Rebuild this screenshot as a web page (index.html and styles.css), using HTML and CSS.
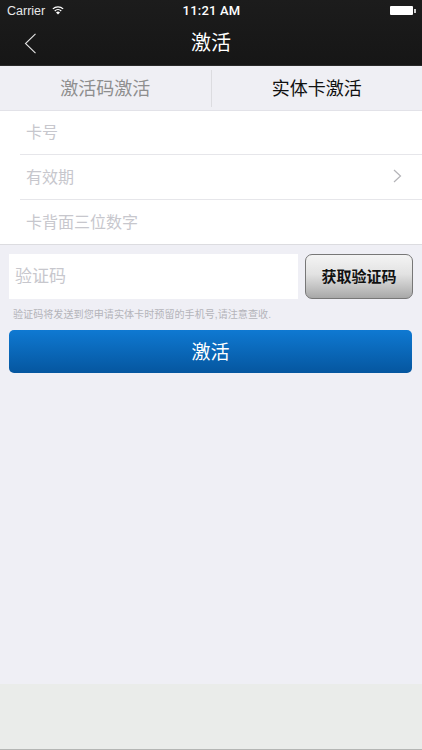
FILE: index.html
```html
<!DOCTYPE html>
<html lang="zh-CN">
<head>
  <meta charset="UTF-8" />
  <meta name="viewport" content="width=device-width, initial-scale=1.0" />
  <title>激活</title>
  <link rel="stylesheet" href="styles.css">
</head>
<body>
  <div class="app">
    <header class="nav">
      <div class="status">
        <div class="status-left">
          <span>Carrier</span>
          <svg class="wifi" width="12" height="9" viewBox="0 0 14 10">
            <path d="M7 9.8 4.7 7.3a3.2 3.2 0 0 1 4.6 0z" fill="#fff"/>
            <path d="M3.2 5.5a5.4 5.4 0 0 1 7.6 0M1 3.1a8.6 8.6 0 0 1 12 0" fill="none" stroke="#fff" stroke-width="1.5"/>
          </svg>
        </div>
        <div class="status-time">11:21 AM</div>
        <div class="status-right">
          <span class="battery"></span><span class="battery-tip"></span>
        </div>
      </div>
      <div class="nav-bar">
        <svg class="back" width="13" height="21" viewBox="0 0 13 21">
          <path d="M11.5 0.8 1.5 10.5l10 9.7" fill="none" stroke="#e4e4e4" stroke-width="1.1"/>
        </svg>
        <h1>激活</h1>
      </div>
    </header>

    <div class="tabs">
      <div class="tab tab-left">激活码激活</div>
      <div class="tab tab-active">实体卡激活</div>
    </div>

    <div class="form-group">
      <div class="form-row">卡号</div>
      <div class="form-row">
        <span>有效期</span>
        <svg class="chevron" width="9" height="14" viewBox="0 0 9 14">
          <path d="M1 1l6.5 6L1 13" fill="none" stroke="#b4b4b8" stroke-width="1.2"/>
        </svg>
      </div>
      <div class="form-row">卡背面三位数字</div>
    </div>

    <main class="content">
      <div class="code-row">
        <div class="code-input">验证码</div>
        <button class="code-btn">获取验证码</button>
      </div>
      <p class="hint">验证码将发送到您申请实体卡时预留的手机号,请注意查收.</p>
      <button class="submit">激活</button>
    </main>

    <footer class="bottom"></footer>
  </div>
</body>
</html>
```

FILE: styles.css
```css
* {
  box-sizing: border-box;
}

body {
  margin: 0;
  font-family: "Liberation Sans", "Noto Sans CJK SC", sans-serif;
}

.app {
  display: flex;
  flex-direction: column;
  width: 422px;
  height: 750px;
  overflow: hidden;
  background: #efeff5;
}

.nav {
  height: 66px;
  background: linear-gradient(#1c1c1c, #161616);
  border-bottom: 1px solid #2a2a2a;
  color: #fff;
}

.status {
  display: grid;
  grid-template-columns: 1fr auto 1fr;
  align-items: center;
  height: 21px;
  padding: 0 6px 0 7px;
  font-size: 12.5px;
}

.status-left {
  display: flex;
  align-items: center;
  gap: 7px;
  color: #e8e8e8;
}

.status-time {
  font-family: Roboto, sans-serif;
  font-weight: 500;
  font-size: 13px;
  letter-spacing: 0.2px;
}

.status-right {
  display: flex;
  align-items: center;
  justify-content: flex-end;
}

.battery {
  width: 23px;
  height: 9px;
  background: #fff;
  border-radius: 1px;
}

.battery-tip {
  width: 2px;
  height: 4px;
  margin-left: 1px;
  background: #ccc;
}

.nav-bar {
  display: flex;
  align-items: center;
  justify-content: center;
  position: relative;
  height: 42px;
  padding-bottom: 2px;
}

.nav-bar h1 {
  margin: 0;
  font-size: 20px;
  font-weight: normal;
}

.back {
  position: absolute;
  left: 24px;
  top: 12px;
}

.tabs {
  display: flex;
  height: 45px;
  padding: 4px 0 0;
  background: #efeff4;
  border-bottom: 1px solid #e2e2e8;
}

.tab {
  flex: 1;
  height: 37px;
  line-height: 38px;
  text-align: center;
  font-size: 18px;
  color: #8e8e8e;
}

.tab-left {
  border-right: 1px solid #dcdce0;
}

.tab-active {
  color: #111;
}

.form-group {
  padding-left: 20px;
  background: #fff;
  border-bottom: 1px solid #dcdce0;
}

.form-row {
  display: flex;
  align-items: center;
  justify-content: space-between;
  height: 45px;
  padding: 0 20px 3px 6px;
  font-size: 16px;
  color: #c7c7cd;
  border-bottom: 1px solid #e6e6ea;
}

.form-row:first-child {
  height: 44px;
}

.form-row:last-child {
  height: 44px;
  border-bottom: none;
}

.content {
  flex: 1;
  padding: 9px 9px 0 9px;
}

.code-row {
  display: flex;
  justify-content: space-between;
}

.code-input {
  width: 289px;
  height: 45px;
  padding-left: 6px;
  line-height: 45px;
  font-size: 17px;
  color: #c7c7cd;
  background: #fff;
}

.code-btn {
  width: 108px;
  height: 45px;
  padding: 0 0 3px;
  font-family: inherit;
  font-size: 15px;
  font-weight: bold;
  color: #111;
  background: linear-gradient(#f4f4f4, #e2e2e2 45%, #a8a8a8);
  border: 1px solid #777;
  border-radius: 7px;
}

.hint {
  margin: 8px 0 0 4px;
  font-size: 10.1px;
  line-height: 16px;
  color: #b4b4ba;
}

.submit {
  display: block;
  width: 403px;
  height: 43px;
  margin-top: 7px;
  padding: 0 0 2px;
  font-family: inherit;
  font-size: 19px;
  color: #fff;
  background: linear-gradient(#0f79d2, #05569f);
  border: none;
  border-radius: 5px;
}

.bottom {
  height: 66px;
  background: #eaecea;
  border-bottom: 1px solid #b4b6b4;
}
```
